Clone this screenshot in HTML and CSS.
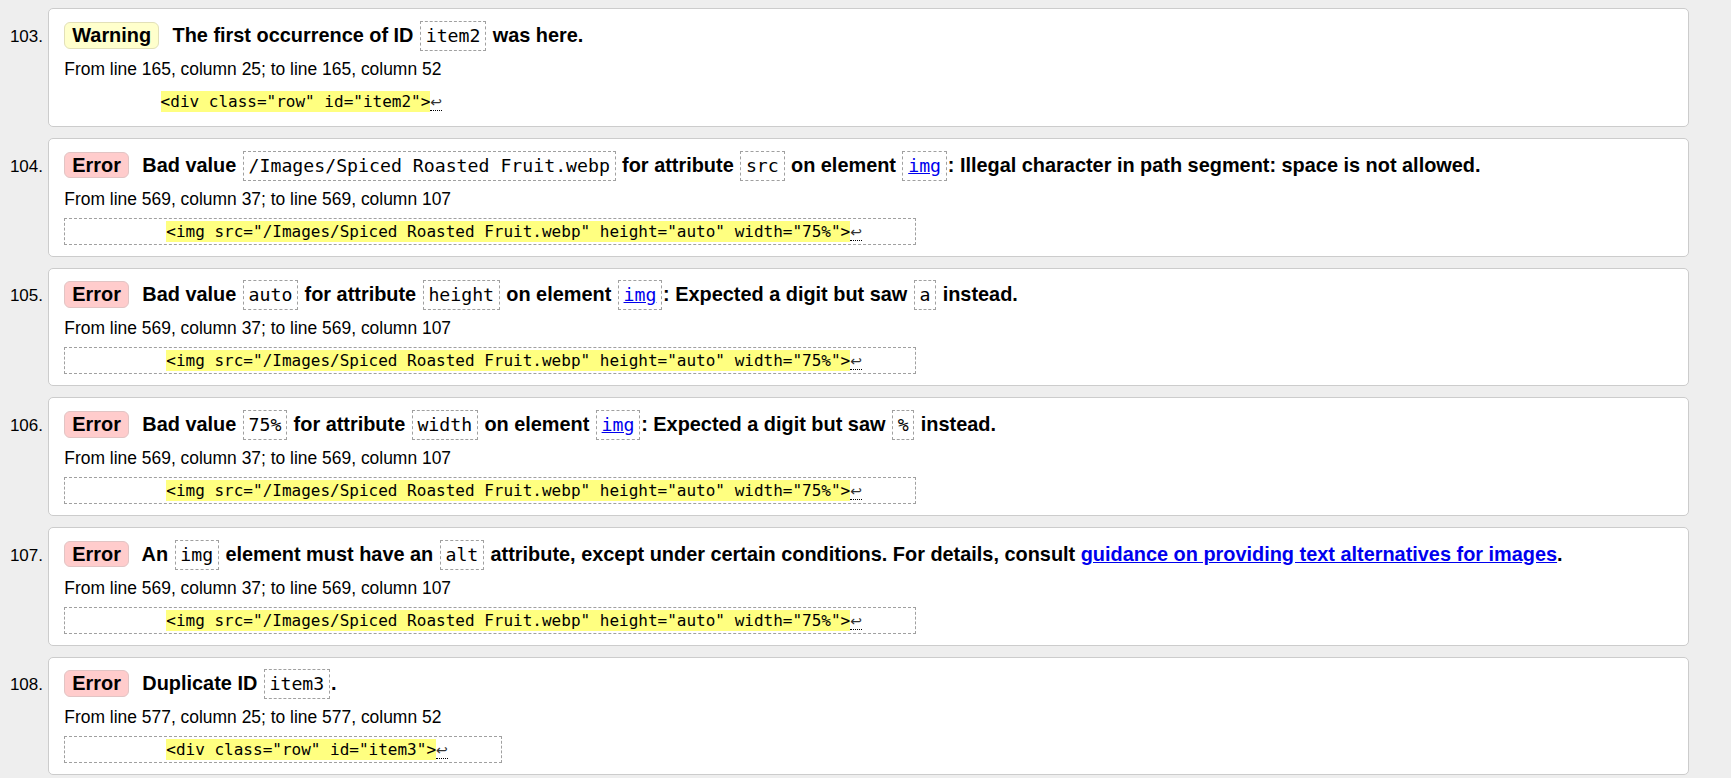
FILE: index.html
```html
<!DOCTYPE html>
<html lang="en">
<head>
<meta charset="utf-8">
<title>Validator messages</title>
<link rel="stylesheet" href="styles.css">
</head>
<body>
<ol class="messages" start="103">
  <li class="msg">
    <p class="title"><strong class="badge badge-warning">Warning</strong> <span>The first occurrence of ID <code class="ref">item2</code> was here.</span></p>
    <p class="loc">From line 165, column 25; to line 165, column 52</p>
    <code class="extract extract-plain">          <b>&lt;div class="row" id="item2"&gt;</b><span class="lf">↩</span></code>
  </li>
  <li class="msg">
    <p class="title"><strong class="badge badge-error">Error</strong> <span>Bad value <code class="ref">/Images/Spiced Roasted Fruit.webp</code> for attribute <code class="ref">src</code> on element <code class="ref"><a href="#">img</a></code>: Illegal character in path segment: space is not allowed.</span></p>
    <p class="loc">From line 569, column 37; to line 569, column 107</p>
    <code class="extract">          <b>&lt;img src="/Images/Spiced Roasted Fruit.webp" height="auto" width="75%"&gt;</b><span class="lf">↩</span>     </code>
  </li>
  <li class="msg">
    <p class="title"><strong class="badge badge-error">Error</strong> <span>Bad value <code class="ref">auto</code> for attribute <code class="ref">height</code> on element <code class="ref"><a href="#">img</a></code>: Expected a digit but saw <code class="ref">a</code> instead.</span></p>
    <p class="loc">From line 569, column 37; to line 569, column 107</p>
    <code class="extract">          <b>&lt;img src="/Images/Spiced Roasted Fruit.webp" height="auto" width="75%"&gt;</b><span class="lf">↩</span>     </code>
  </li>
  <li class="msg">
    <p class="title"><strong class="badge badge-error">Error</strong> <span>Bad value <code class="ref">75%</code> for attribute <code class="ref">width</code> on element <code class="ref"><a href="#">img</a></code>: Expected a digit but saw <code class="ref">%</code> instead.</span></p>
    <p class="loc">From line 569, column 37; to line 569, column 107</p>
    <code class="extract">          <b>&lt;img src="/Images/Spiced Roasted Fruit.webp" height="auto" width="75%"&gt;</b><span class="lf">↩</span>     </code>
  </li>
  <li class="msg">
    <p class="title"><strong class="badge badge-error">Error</strong> <span>An <code class="ref">img</code> element must have an <code class="ref">alt</code> attribute, except under certain conditions. For details, consult <a href="#">guidance on providing text alternatives for images</a>.</span></p>
    <p class="loc">From line 569, column 37; to line 569, column 107</p>
    <code class="extract">          <b>&lt;img src="/Images/Spiced Roasted Fruit.webp" height="auto" width="75%"&gt;</b><span class="lf">↩</span>     </code>
  </li>
  <li class="msg">
    <p class="title"><strong class="badge badge-error">Error</strong> <span>Duplicate ID <code class="ref">item3</code>.</span></p>
    <p class="loc">From line 577, column 25; to line 577, column 52</p>
    <code class="extract">          <b>&lt;div class="row" id="item3"&gt;</b><span class="lf">↩</span>     </code>
  </li>
</ol>
</body>
</html>
```

FILE: styles.css
```css
html, body {
  margin: 0;
  padding: 0;
}

body {
  background: #eeeeee;
  color: #000;
  font-family: "Liberation Sans", Arial, sans-serif;
  font-size: 17.6px;
  overflow: hidden;
}

.messages {
  margin: 0;
  padding: 8.3px 41.7px 0 47.7px;
  list-style: decimal outside;
}

.msg {
  background: #fff;
  border: 1px solid #cccccc;
  border-radius: 5px;
  padding: 11.7px 15px 11px 15.6px;
  margin-bottom: 11px;
}

.msg::marker {
  font-size: 17px;
}

.title {
  margin: 0;
  font-weight: bold;
  font-size: 19.9px;
  line-height: 1;
  white-space: nowrap;
}

.badge {
  display: inline-block;
  line-height: 24.7px;
  padding: 0 7px;
  border: 1px solid #d6d6d6;
  border-radius: 6px;
  margin-right: 7.9px;
}

.badge-warning {
  background: #ffffcc;
  border-color: #e2e0b8;
}

.badge-error {
  background: #ffcccc;
  border-color: #e2c4c4;
}

.ref {
  display: inline-block;
  font-family: "DejaVu Sans Mono", "Liberation Mono", monospace;
  font-weight: normal;
  font-size: 18.2px;
  line-height: 28px;
  padding: 0 4.8px;
  border: 1px dashed #a0a0a0;
  margin: 0 0.9px;
}

a {
  color: #0000ee;
  text-decoration: underline;
}

.loc {
  margin: 8px 0 0;
  font-size: 17.45px;
  line-height: 20px;
}

.extract {
  display: block;
  width: max-content;
  margin-top: 9px;
  padding: 3px 4.7px;
  border: 1px dashed #a0a0a0;
  font-family: "DejaVu Sans Mono", "Liberation Mono", monospace;
  font-size: 16px;
  line-height: 19px;
  white-space: pre;
}

.extract-plain {
  border: none;
  padding: 4px 0;
}

.extract b {
  font-weight: normal;
  background: #ffff80;
  padding: 1px 0;
}

.lf {
  font-family: "DejaVu Sans", sans-serif;
  font-size: 14px;
  line-height: 1;
  color: #333;
  border-bottom: 1px dotted #000;
}
```
